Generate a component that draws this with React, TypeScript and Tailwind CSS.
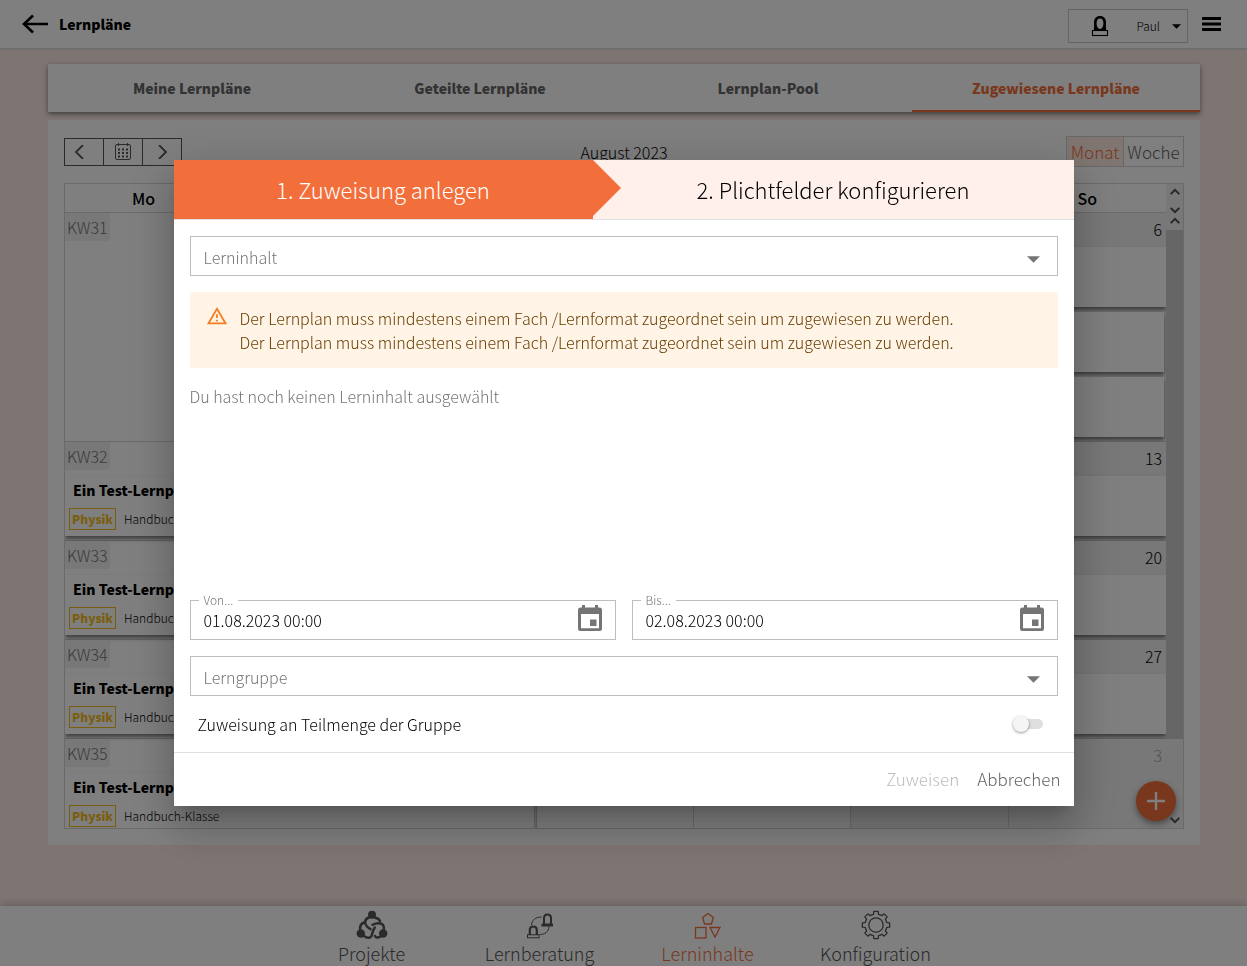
import { useState } from "react";
import type { ReactNode } from "react";

const sans = "font-['Noto_Sans_CJK_SC',sans-serif]";

function PersonIcon({ className }: { className?: string }) {
  return (
    <svg viewBox="0 0 18 22" className={className} aria-hidden="true">
      <path
        d="M3 15.500V7.500C3 3.500 5.200 1 9 1s6 2.500 6 6.500v8zM9 3.500c-2.300 0-3.400 1.800-3.400 4.800 0 3.200 1.300 5.700 3.400 5.700s3.400-2.500 3.400-5.700c0-3-1.100-4.800-3.400-4.800z"
        fill="currentColor"
        fillRule="evenodd"
      />
      <rect x="1.500" y="15.500" width="15" height="5" fill="none" stroke="currentColor" strokeWidth="1.100" />
    </svg>
  );
}

function ProjectsIcon() {
  return (
    <svg viewBox="0 0 32 30" className="h-[30px] w-8" fill="none" stroke="currentColor" strokeLinecap="round" aria-hidden="true">
      <g fill="currentColor" stroke="none">
        <circle cx="16" cy="4.700" r="4" />
        <circle cx="4.800" cy="23.500" r="4.200" />
        <circle cx="27.200" cy="23.500" r="4.200" />
      </g>
      <path d="M13 7.500C8.500 9 8 13 11 16.500c1.200 1.300 2.200 2 3.500 2.700M18.500 7.500c2.500.3 4.500 1.500 5.500 3.500" strokeWidth="2.500" />
      <path d="M4.200 20c-.5-3.500 1-6.500 3.800-7.500M8 26c3.500 2.700 7 2.500 8-1.500.6-2.400 1-4.500 2.800-7" strokeWidth="2.500" />
      <path d="M16.500 14.800c4.500-2.300 9.500-2.300 11 1.200.5 1.200.5 2.500.3 4M24.500 26.500c-2.500 1.500-5 1.300-5.500-.5" strokeWidth="2.500" />
    </svg>
  );
}

function AdviceIcon() {
  return (
    <svg viewBox="0 0 28 28" className="h-7 w-7" fill="none" stroke="currentColor" aria-hidden="true">
      <path d="M18 12V6c0-4.700 7-4.700 7 0v6" strokeWidth="2" />
      <path d="M15.500 13h11.500" strokeWidth="3" />
      <path d="M3.800 23v-5c0-4.700 7-4.700 7 0v5" strokeWidth="2.200" />
      <rect x="1.500" y="22.800" width="11.500" height="3" strokeWidth="1" />
      <path d="M5.500 13C6 8 9.500 5 15.500 5M13.500 22.500c5.500 0 9-2.500 9.500-8" strokeWidth="1" />
    </svg>
  );
}

function ContentIcon() {
  return (
    <svg viewBox="0 0 28 28" className="h-7 w-7" fill="none" stroke="currentColor" strokeWidth="1.300" aria-hidden="true">
      <path d="M14 1.500 19.300 5.500 17.500 12h-7L8.700 5.500z" />
      <rect x="1.500" y="15.500" width="10.500" height="10.500" />
      <path d="M16 15.500h10L21 25z" />
    </svg>
  );
}

const gearPoints = Array.from({ length: 8 }, (_, i) => {
  const point = (radius: number, degrees: number) => {
    const a = ((i * 45 + degrees) * Math.PI) / 180;
    return `${(15 + radius * Math.cos(a)).toFixed(2)},${(15 + radius * Math.sin(a)).toFixed(2)}`;
  };
  return [point(11, -13), point(13.8, -9), point(13.8, 9), point(11, 13), point(11, 22.5)].join(" ");
}).join(" ");

function GearIcon() {
  return (
    <svg viewBox="0 0 30 30" className="h-[30px] w-[30px]" fill="none" stroke="currentColor" strokeWidth="1.300" aria-hidden="true">
      <circle cx="15" cy="15" r="7.200" />
      <polygon points={gearPoints} strokeLinejoin="round" />
    </svg>
  );
}

function Chevron({ dir, className }: { dir: "up" | "down" | "left" | "right"; className?: string }) {
  const paths = { up: "M2 9.500l5-5 5 5", down: "M2 4.500l5 5 5-5", left: "M10 0 3 7l7 7", right: "M4 0l7 7-7 7" };
  return (
    <svg viewBox="0 0 14 14" className={className} fill="none" stroke="currentColor" aria-hidden="true">
      <path d={paths[dir]} strokeWidth={dir === "up" || dir === "down" ? 2.4 : 1.8} />
    </svg>
  );
}

function CalendarGridIcon() {
  return (
    <svg viewBox="0 0 16 17" className="h-[17px] w-4" fill="none" stroke="currentColor" aria-hidden="true">
      <rect x=".5" y="1.500" width="15" height="15" rx="1.500" strokeWidth="1" />
      <path d="M3.500 0v3M12.500 0v3" strokeWidth="1" />
      <path d="M3 6.500h10M3 10h10M3 13.500h10" strokeWidth="2" strokeDasharray="2 2" />
    </svg>
  );
}

function DateIcon() {
  return (
    <svg viewBox="0 0 24 26" className="h-[26px] w-6" fill="currentColor" aria-hidden="true">
      <path fillRule="evenodd" d="M4 0h3v2.500h10V0h3v2.500h1.500A2.500 2.500 0 0 1 24 5v18.500a2.500 2.500 0 0 1-2.500 2.500h-19A2.500 2.500 0 0 1 0 23.500V5a2.500 2.500 0 0 1 2.500-2.500H4zM3 9v14.300h18V9zM12 14.500h6.500V21H12z" />
    </svg>
  );
}

function Triangle({ className }: { className?: string }) {
  return (
    <svg viewBox="0 0 12 6" className={className} fill="currentColor" aria-hidden="true">
      <path d="M0 0h12L6 6z" />
    </svg>
  );
}

const tabs = ["Meine Lernpläne", "Geteilte Lernpläne", "Lernplan-Pool", "Zugewiesene Lernpläne"];
const dayHeads = ["Mo", "", "", "", "", "", "So"];
const weeks = [
  { label: "KW31", sunday: "6", plan: false, muted: false },
  { label: "KW32", sunday: "13", plan: true, muted: false },
  { label: "KW33", sunday: "20", plan: true, muted: false },
  { label: "KW34", sunday: "27", plan: true, muted: false },
  { label: "KW35", sunday: "3", plan: true, muted: true },
];

function Header() {
  return (
    <header className="flex h-[50px] shrink-0 items-center border-b-2 border-[#dcdcdc] bg-white pr-[26px] pl-[22px]">
      <button aria-label="Zurück" className="text-black">
        <svg viewBox="0 0 27 20" className="h-5 w-[27px]" fill="none" stroke="currentColor" strokeWidth="2.600" aria-hidden="true">
          <path d="M26 10H2M11 1.500 2 10l9 8.500" />
        </svg>
      </button>
      <h1 className="ml-[10px] text-sm font-black">Lernpläne</h1>
      <button className="mb-[5px] ml-auto flex h-[34px] w-[120px] items-center self-end border border-[#c8c8c8] pr-[6px] pl-[22px] text-xs font-light text-black">
        <PersonIcon className="h-[22px] w-[18px]" />
        <span className="ml-auto">Paul</span>
        <Triangle className="ml-3 h-[5px] w-[9px]" />
      </button>
      <button aria-label="Menü" className="ml-[14px]">
        <svg viewBox="0 0 19 14" className="h-[14px] w-[19px]" stroke="currentColor" strokeWidth="2.800" aria-hidden="true">
          <path d="M0 1.500h19M0 7h19M0 12.500h19" />
        </svg>
      </button>
    </header>
  );
}

function PlanCard() {
  return (
    <article className="mr-[2px] h-[60px] bg-white px-1 pt-[2px] shadow-[0_3px_4px_rgba(0,0,0,0.5)]">
      <h3 className="px-1 text-sm leading-6 font-black">Ein Test-Lernplan</h3>
      <p className="mt-[6px] flex items-center gap-2 text-xs">
        <span className="border border-[#f5bd20] px-[2px] leading-5 font-black text-[#f5bd20]">Physik</span>
        <span className="font-light">Handbuch-Klasse</span>
      </p>
    </article>
  );
}

function Calendar() {
  return (
    <div className="mt-4 flex h-[646px] border border-[#d4d4d4]">
      <div className="flex min-w-0 grow flex-col overflow-hidden">
        <div className="grid h-[29px] shrink-0 grid-cols-7 border-b border-[#d4d4d4]">
          {dayHeads.map((d, i) => (
            <div key={i} className="text-center text-base leading-7 font-medium">{d}</div>
          ))}
        </div>
        {weeks.map((w) => (
          <div key={w.label} className={`grid shrink-0 grid-cols-7 border-b border-[#d4d4d4] ${w.plan ? "h-[99px]" : "h-[229px]"}`}>
            <div className={`border-r border-[#d4d4d4] ${w.plan ? "col-span-3" : "col-span-1"}`}>
              <div className="h-[34px]">
                <span className="inline-block h-7 rounded-br bg-[#f0f0f0] px-[2px] text-base leading-7 font-light text-[#757575]">{w.label}</span>
              </div>
              {w.plan && <PlanCard />}
            </div>
            {!w.plan && (
              <>
                <div className="border-r border-[#d4d4d4]" />
                <div className="border-r border-[#d4d4d4]" />
              </>
            )}
            <div className="border-r border-[#d4d4d4]" />
            <div className="border-r border-[#d4d4d4]" />
            <div className="border-r border-[#d4d4d4] bg-[#f0f0f0]" />
            <div className="flex flex-col bg-[#f0f0f0]">
              <div className={`h-[34px] shrink-0 pr-1 text-right text-base leading-8 font-light ${w.muted ? "text-[#a8a8a8]" : "text-black"}`}>{w.sunday}</div>
              {!w.muted && <div className="h-[60px] shrink-0 bg-white shadow-[0_3px_4px_rgba(0,0,0,0.5)]" />}
              {!w.plan && (
                <>
                  <div className="mt-[5px] mr-[2px] h-[60px] shrink-0 bg-white shadow-[0_3px_4px_rgba(0,0,0,0.5)]" />
                  <div className="mt-[5px] mr-[2px] h-[60px] shrink-0 bg-white shadow-[0_3px_4px_rgba(0,0,0,0.5)]" />
                </>
              )}
            </div>
          </div>
        ))}
      </div>
      <div className="flex w-[17px] shrink-0 flex-col items-center bg-[#f0f0f0] text-[#505050]">
        <Chevron dir="up" className="mt-[2px] h-3 w-3" />
        <Chevron dir="down" className="mt-[6px] h-3 w-3" />
        <Chevron dir="up" className="-mt-px h-3 w-3" />
        <div className="mt-[3px] h-[509px] w-full bg-[#cdcdcd]" />
        <Chevron dir="down" className="mt-auto mb-[2px] h-3 w-3" />
      </div>
    </div>
  );
}

function NavItem({ label, icon, active }: { label: string; icon: ReactNode; active?: boolean }) {
  return (
    <a href="#" className={`flex w-[168px] flex-col items-center ${active ? "text-[#f26f3c]" : "text-[#555]"}`}>
      <span className="flex h-[34px] shrink-0 items-end">{icon}</span>
      <span className="text-lg leading-[26px] font-light">{label}</span>
    </a>
  );
}

function SelectField({ label }: { label: string }) {
  return (
    <div className="relative">
      <select aria-label={label} className="block h-10 w-full appearance-none border border-[#bdbdbd] bg-white px-[13px] pt-[2px] text-base font-light text-[#757575]">
        <option>{label}</option>
      </select>
      <Triangle className="pointer-events-none absolute top-5 right-[18px] h-[7px] w-[13px] text-[#757575]" />
    </div>
  );
}

function DateField({ label, id, value }: { label: string; id: string; value: string }) {
  return (
    <div className="relative flex h-10 items-center border border-[#bdbdbd] pr-[13px]">
      <label htmlFor={id} className="absolute -top-[9px] left-2 bg-white px-[5px] text-xs leading-4 font-light text-[#757575]">{label}</label>
      <input id={id} defaultValue={value} className="h-full min-w-0 grow px-[13px] text-base font-light outline-none" />
      <button aria-label={`${label} Datum wählen`} className="mb-1 text-[#757575]"><DateIcon /></button>
    </div>
  );
}

function AssignDialog() {
  const [subset, setSubset] = useState(false);
  return (
    <div role="dialog" aria-modal="true" className="flex h-[646px] w-[900px] flex-col bg-white shadow-[0_11px_15px_-7px_rgba(0,0,0,0.2),0_24px_38px_3px_rgba(0,0,0,0.14),0_9px_46px_8px_rgba(0,0,0,0.12)]">
      <div className="flex h-[60px] shrink-0 border-b border-[#e0e0e0] bg-[#fff0eb] text-[22px] font-light">
        <div className="flex w-[419px] items-center justify-center bg-[#f26f3c] text-white">1. Zuweisung anlegen</div>
        <svg viewBox="0 0 28 59" className="h-[59px] w-7 shrink-0 text-[#f26f3c]" fill="currentColor" aria-hidden="true">
          <path d="M0 0 28 28 0 56z" />
        </svg>
        <div className="flex grow items-center justify-center pr-7 text-black">2. Plichtfelder konfigurieren</div>
      </div>
      <div className="flex grow flex-col px-4 pt-4">
        <SelectField label="Lerninhalt" />
        <div className="mt-4 flex h-[76px] shrink-0 bg-[#fff4e5] px-4 py-[14px] text-base leading-6 font-light text-[#663c00]">
          <svg viewBox="0 0 24 25" className="-mt-px h-[23px] w-[22px] text-[#f57c1f]" fill="currentColor" aria-hidden="true">
            <path d="M12 5.990 19.530 19H4.470L12 5.990M12 2 1 21h22L12 2zm1 14h-2v2h2v-2zm0-6h-2v4h2v-4z" />
          </svg>
          <div className="ml-3">
            <p>Der Lernplan muss mindestens einem Fach /Lernformat zugeordnet sein um zugewiesen zu werden.</p>
            <p>Der Lernplan muss mindestens einem Fach /Lernformat zugeordnet sein um zugewiesen zu werden.</p>
          </div>
        </div>
        <p className="mt-4 text-base leading-6 font-light text-[#757575]">Du hast noch keinen Lerninhalt ausgewählt</p>
        <div className="mt-auto grid grid-cols-2 gap-4">
          <DateField id="from" label="Von..." value="01.08.2023 00:00" />
          <DateField id="to" label="Bis..." value="02.08.2023 00:00" />
        </div>
        <div className="mt-4"><SelectField label="Lerngruppe" /></div>
        <label className="flex h-14 items-center justify-between pr-[15px] pl-2 text-base font-light text-black">
          Zuweisung an Teilmenge der Gruppe
          <span className="relative flex h-[18px] w-[30px] items-center">
            <input type="checkbox" role="switch" checked={subset} onChange={(e) => setSubset(e.target.checked)} className="peer absolute inset-0 opacity-0" />
            <span className="ml-2 h-[10px] w-[22px] rounded-full bg-[#dedede]" />
            <span className="absolute left-0 h-4 w-4 rounded-full bg-[#f5f5f5] shadow-[0_1px_3px_rgba(0,0,0,0.4)] peer-checked:left-[14px]" />
          </span>
        </label>
      </div>
      <div className="flex h-[54px] shrink-0 items-center justify-end gap-[18px] border-t border-[#e0e0e0] pr-[13px] pb-[2px] text-[17px] font-light">
        <button disabled className="text-[#bdbdbd]">Zuweisen</button>
        <button className="text-[#666]">Abbrechen</button>
      </div>
    </div>
  );
}

export default function App() {
  return (
    <div className={`flex min-h-screen flex-col bg-[#fdebe7] text-black ${sans}`}>
      <Header />
      <main className="grow pt-[14px] pr-[47px] pb-[61px] pl-12">
        <nav className="grid h-12 grid-cols-4 bg-white shadow-[0_2px_5px_rgba(0,0,0,0.5)]">
          {tabs.map((t, i) => (
            <a key={t} href="#" className={`flex items-center justify-center border-b-2 pt-[2px] text-sm font-black ${i === 3 ? "border-[#f26f3c] text-[#f26f3c]" : "border-transparent text-[#666]"}`}>{t}</a>
          ))}
        </nav>
        <section className="mt-2 bg-white p-4">
          <div className="flex h-[31px] items-center justify-between">
            <div className="grid h-7 w-[118px] grid-cols-[39px_39px_1fr] divide-x divide-[#555] border border-[#555] text-[#555]">
              <button aria-label="Zurück" className="flex items-center justify-center pr-2"><Chevron dir="left" className="h-[14px] w-[14px]" /></button>
              <button aria-label="Heute" className="flex items-center justify-center"><CalendarGridIcon /></button>
              <button aria-label="Weiter" className="flex items-center justify-center"><Chevron dir="right" className="h-[14px] w-[14px]" /></button>
            </div>
            <h2 className="text-base font-light">August 2023</h2>
            <div className="flex h-[31px] w-[118px] border border-[#d0d0d0] text-[17px] leading-[30px] font-light">
              <button className="w-[57px] border-r border-[#d0d0d0] bg-[#ffece2] text-[#f26f3c]">Monat</button>
              <button className="grow text-[#666]">Woche</button>
            </div>
          </div>
          <Calendar />
        </section>
      </main>
      <footer className="flex h-[60px] shrink-0 justify-center bg-white shadow-[0_-2px_8px_rgba(0,0,0,0.2)]">
        <NavItem label="Projekte" icon={<ProjectsIcon />} />
        <NavItem label="Lernberatung" icon={<AdviceIcon />} />
        <NavItem label="Lerninhalte" icon={<ContentIcon />} active />
        <NavItem label="Konfiguration" icon={<GearIcon />} />
      </footer>
      <button aria-label="Hinzufügen" className="fixed right-[71px] bottom-[145px] flex h-10 w-10 items-center justify-center rounded-full bg-[#f26f3c] text-white shadow-[0_3px_6px_rgba(0,0,0,0.4)]">
        <svg viewBox="0 0 18 18" className="h-[18px] w-[18px]" stroke="currentColor" strokeWidth="2.400" aria-hidden="true"><path d="M9 0v18M0 9h18" /></svg>
      </button>
      <div className="fixed inset-0 flex items-center justify-center bg-black/50">
        <AssignDialog />
      </div>
    </div>
  );
}
